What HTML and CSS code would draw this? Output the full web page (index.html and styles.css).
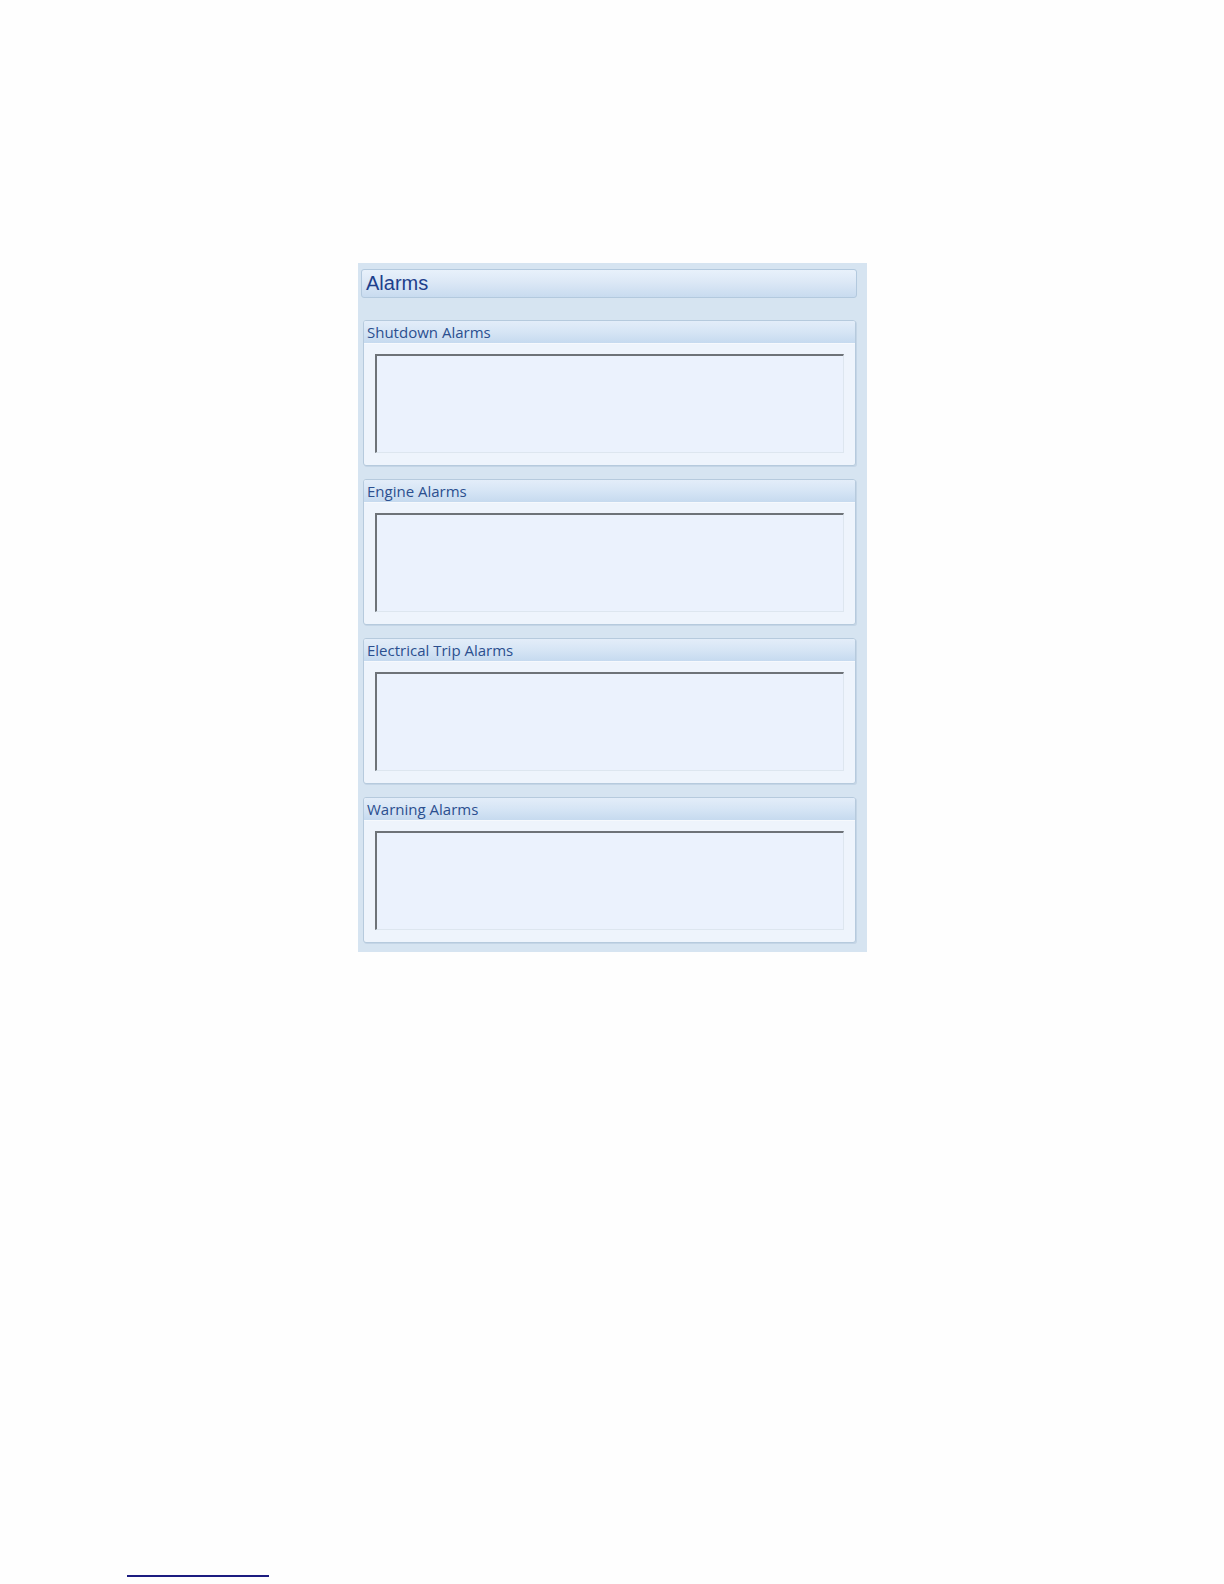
FILE: index.html
```html
<!DOCTYPE html>
<html>
<head>
<meta charset="utf-8">
<link rel="stylesheet" href="styles.css">
</head>
<body>
<div class="page">
  <div class="panel">
    <div class="title">Alarms</div>
    <div class="groups">
      <div class="group">
        <div class="ghead">Shutdown Alarms</div>
        <div class="gbody"><div class="list"></div></div>
      </div>
      <div class="group">
        <div class="ghead">Engine Alarms</div>
        <div class="gbody"><div class="list"></div></div>
      </div>
      <div class="group">
        <div class="ghead">Electrical Trip Alarms</div>
        <div class="gbody"><div class="list"></div></div>
      </div>
      <div class="group">
        <div class="ghead">Warning Alarms</div>
        <div class="gbody"><div class="list"></div></div>
      </div>
    </div>
  </div>
  <div class="footline"></div>
</div>
</body>
</html>
```
FILE: styles.css
```css
html, body {
  margin: 0;
  padding: 0;
  background: #fefefe;
}
.page {
  width: 1224px;
  height: 1584px;
  padding-top: 263px;
  box-sizing: border-box;
  display: flex;
  flex-direction: column;
}
.panel {
  margin-left: 358px;
  width: 509px;
  height: 689px;
  box-sizing: border-box;
  background: #d6e4f1;
  padding: 6px 10px 9px 3px;
}
.title {
  height: 29px;
  box-sizing: border-box;
  border: 1px solid #b3c9de;
  border-radius: 3px;
  background: linear-gradient(#e8f1fb 0%, #dce8f6 45%, #c8dbef 100%);
  font-family: "Liberation Sans", Arial, sans-serif;
  font-size: 20px;
  color: #1e3f8c;
  padding-left: 4px;
  line-height: 27px;
}
.groups {
  margin-top: 22px;
  margin-left: 2px;
  margin-right: 1px;
  display: flex;
  flex-direction: column;
  gap: 13px;
}
.group {
  height: 146px;
  box-sizing: border-box;
  border: 1px solid #b6cadd;
  border-radius: 3px;
  background: #eef4fc;
  box-shadow: 1px 1px 0 #c4d5e6;
  display: flex;
  flex-direction: column;
  overflow: hidden;
}
.ghead {
  height: 22px;
  flex: none;
  background: linear-gradient(#e3edf9 0%, #d6e5f5 50%, #c6daef 100%);
  font-family: "Open Sans", "Noto Sans", sans-serif;
  font-size: 15px;
  color: #2b4f8f;
  padding-left: 3px;
  line-height: 22px;
}
.gbody {
  flex: 1;
  padding: 10px 11px 12px 11px;
  border-top: 1px solid #f6f9fd;
}
.list {
  height: 99px;
  box-sizing: border-box;
  border-top: 2px solid #6e7378;
  border-left: 2px solid #6e7378;
  border-right: 1px solid #dde6ef;
  border-bottom: 1px solid #dde6ef;
  background: #ebf2fd;
}
.footline {
  margin-top: 623px;
  margin-left: 127px;
  width: 142px;
  height: 2px;
  background: #1c1c80;
}
```
